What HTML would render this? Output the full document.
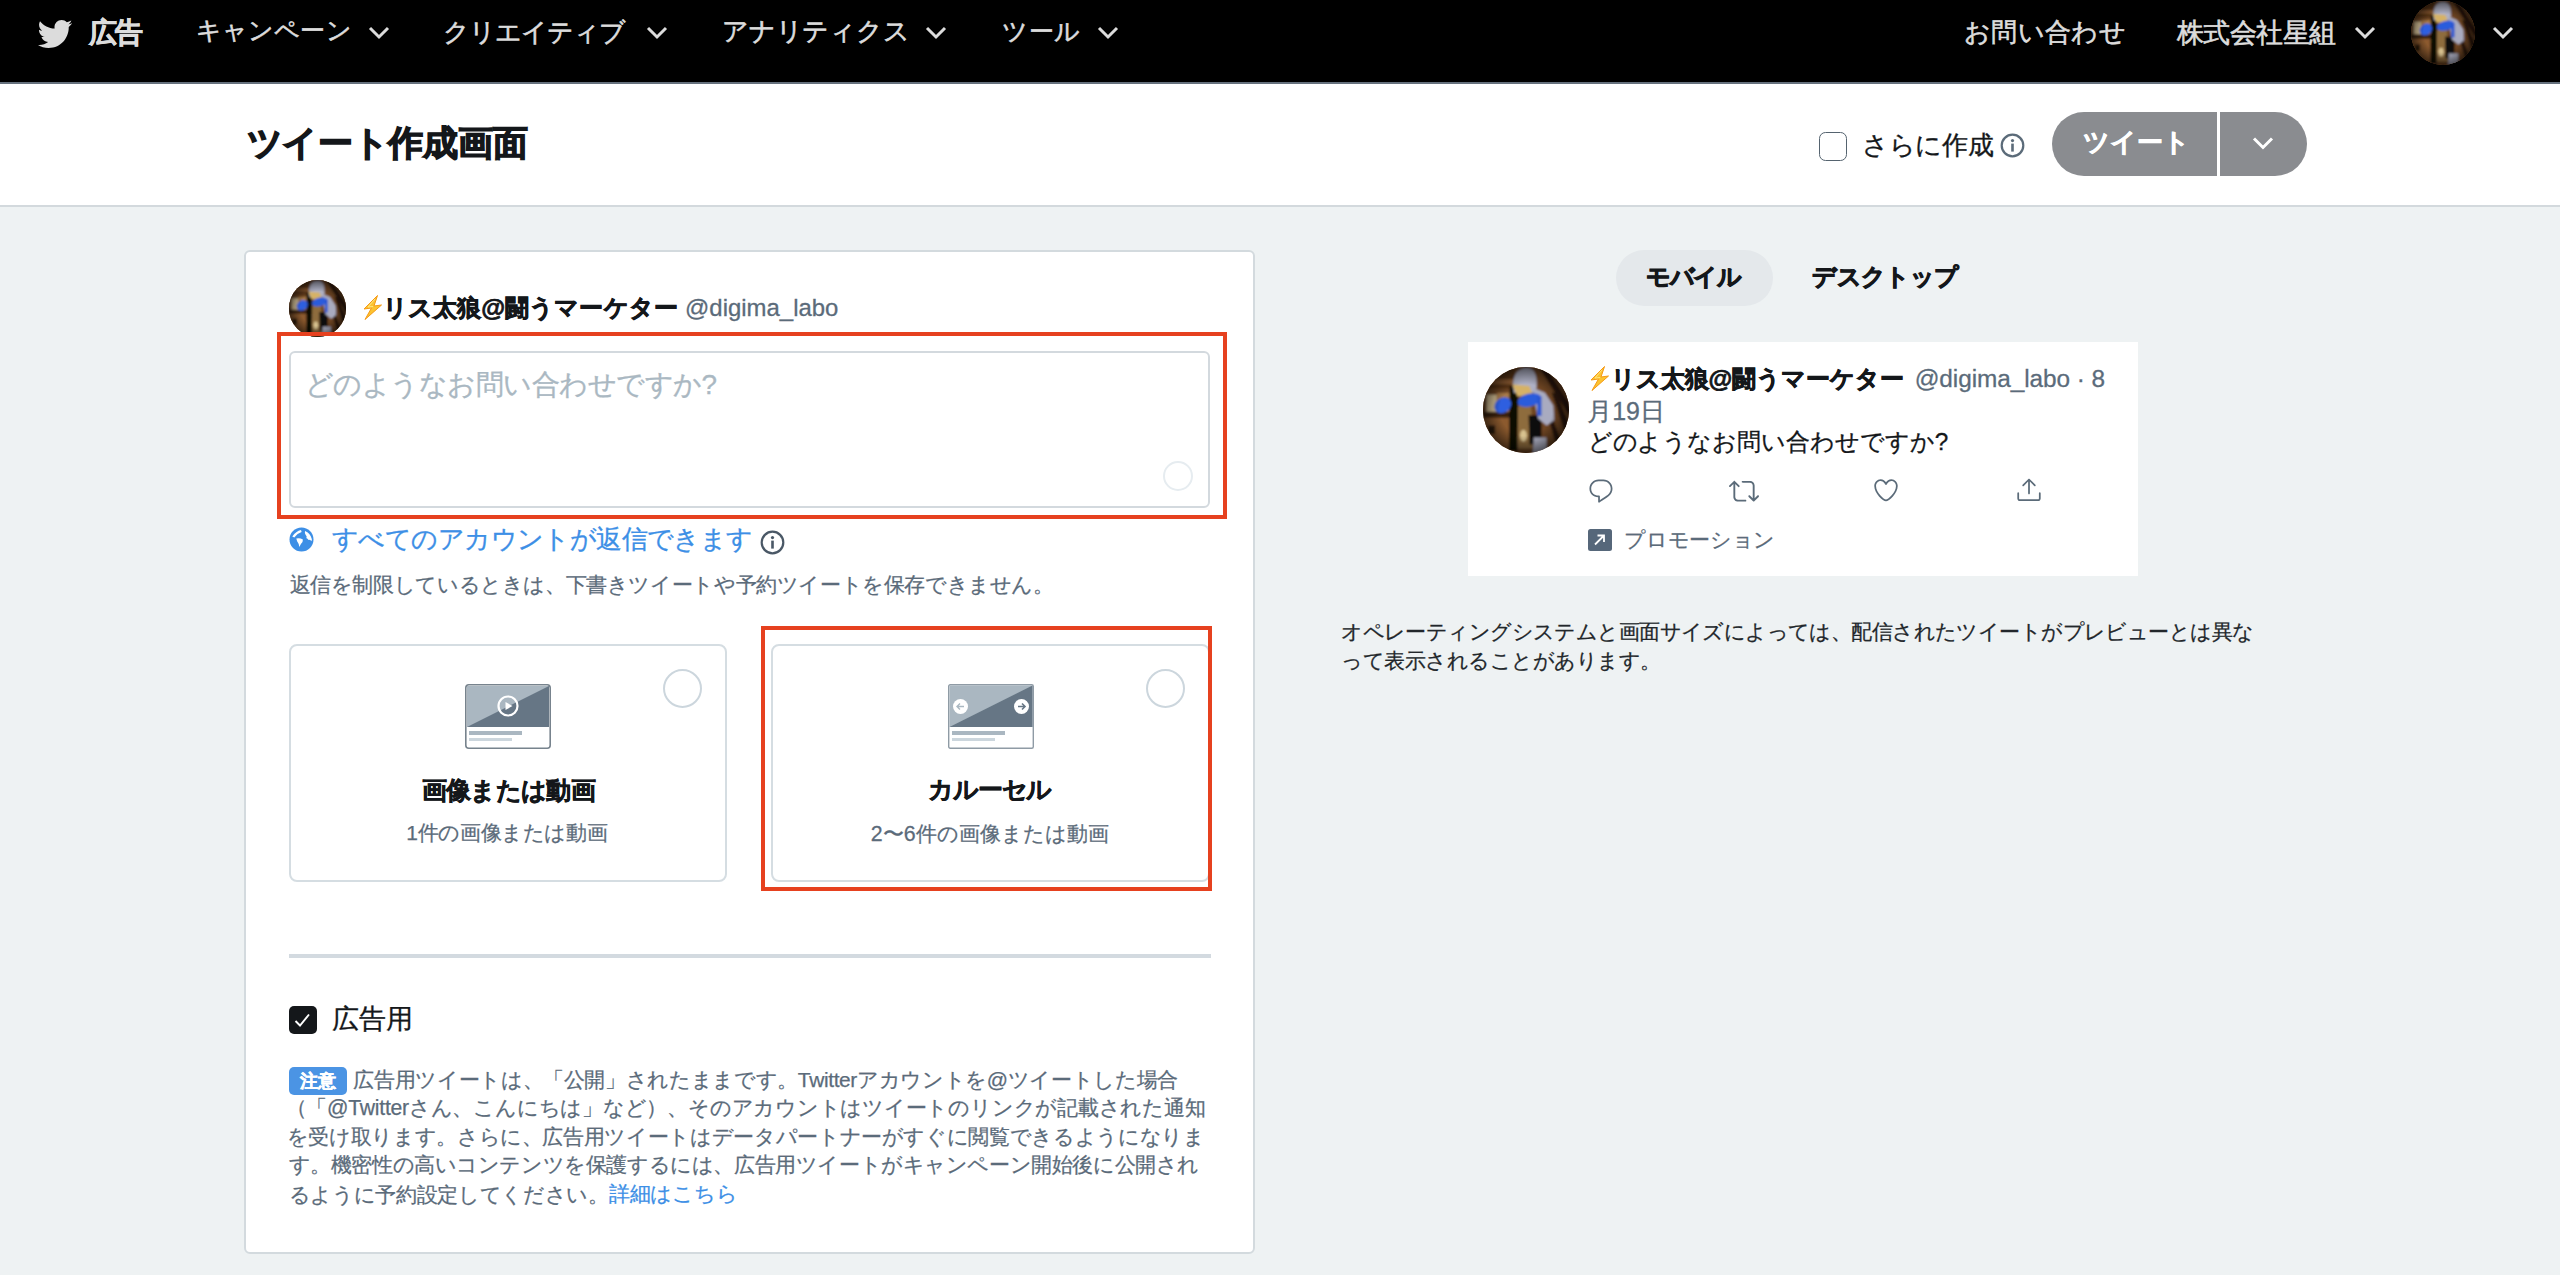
<!DOCTYPE html>
<html><head><meta charset="utf-8"><title>ツイート作成画面</title>
<style>
html,body{margin:0;padding:0}
body{width:2560px;height:1275px;overflow:hidden;position:relative;background:#eef2f3;font-family:"Liberation Sans",sans-serif;}
.a{position:absolute;box-sizing:border-box}
.t{position:absolute;white-space:nowrap;line-height:1}
.chev{position:absolute}
</style></head><body>
<!-- NAV -->
<div class="a" style="left:0;top:0;width:2560px;height:82px;background:#000"></div>
<div class="a" style="left:0;top:82px;width:2560px;height:2px;background:#66717d"></div>
<svg class="a" style="left:37.5px;top:18.5px" width="34.5" height="30" viewBox="1.2 2.2 22.6 19.6"><path fill="#dcdcdc" d="M23.643 4.937c-.835.37-1.732.62-2.675.733.962-.576 1.7-1.49 2.048-2.578-.9.534-1.897.922-2.958 1.13-.85-.904-2.06-1.47-3.4-1.47-2.572 0-4.658 2.086-4.658 4.66 0 .364.042.718.12 1.06-3.873-.195-7.304-2.05-9.602-4.868-.4.69-.63 1.49-.63 2.342 0 1.616.823 3.043 2.072 3.878-.764-.025-1.482-.234-2.11-.583v.06c0 2.257 1.605 4.14 3.737 4.568-.392.106-.803.162-1.227.162-.3 0-.593-.028-.877-.082.593 1.85 2.313 3.198 4.352 3.234-1.595 1.25-3.604 1.995-5.786 1.995-.376 0-.747-.022-1.112-.065 2.062 1.323 4.51 2.093 7.14 2.093 8.57 0 13.255-7.098 13.255-13.254 0-.2-.005-.402-.014-.602.91-.658 1.7-1.477 2.323-2.41z"/></svg>
<!-- nav chevrons -->
<svg class="chev" style="left:368px;top:26px" width="22" height="14" viewBox="0 0 22 14"><path d="M2 2 L11 11 L20 2" fill="none" stroke="#dcdcdc" stroke-width="3"/></svg>
<svg class="chev" style="left:646px;top:26px" width="22" height="14" viewBox="0 0 22 14"><path d="M2 2 L11 11 L20 2" fill="none" stroke="#dcdcdc" stroke-width="3"/></svg>
<svg class="chev" style="left:925px;top:26px" width="22" height="14" viewBox="0 0 22 14"><path d="M2 2 L11 11 L20 2" fill="none" stroke="#dcdcdc" stroke-width="3"/></svg>
<svg class="chev" style="left:1097px;top:26px" width="22" height="14" viewBox="0 0 22 14"><path d="M2 2 L11 11 L20 2" fill="none" stroke="#dcdcdc" stroke-width="3"/></svg>
<svg class="chev" style="left:2354px;top:26px" width="22" height="14" viewBox="0 0 22 14"><path d="M2 2 L11 11 L20 2" fill="none" stroke="#dcdcdc" stroke-width="3"/></svg>
<svg class="chev" style="left:2492px;top:26px" width="22" height="14" viewBox="0 0 22 14"><path d="M2 2 L11 11 L20 2" fill="none" stroke="#dcdcdc" stroke-width="3"/></svg>
<div class="a" style="left:2411px;top:1px;width:64px;height:64px;border-radius:50%;overflow:hidden;background:#5e3a1c"><svg width="64" height="64" viewBox="0 0 100 100"><defs><filter id="blur2411" x="-10%" y="-10%" width="120%" height="120%"><feGaussianBlur stdDeviation="1.4"/></filter><radialGradient id="vblur2411" cx="50%" cy="50%" r="50%"><stop offset="0.6" stop-color="#000" stop-opacity="0"/><stop offset="1" stop-color="#000" stop-opacity="0.55"/></radialGradient></defs><g filter="url(#blur2411)">
<rect x="-5" y="-5" width="110" height="110" fill="#6e4522"/>
<rect x="-5" y="-5" width="42" height="30" fill="#5a3517"/>
<rect x="0" y="14" width="36" height="6" fill="#8e5c30"/>
<rect x="-5" y="58" width="42" height="50" fill="#8c5a2e"/>
<rect x="-5" y="52" width="42" height="7" fill="#3a2110"/>
<rect x="4" y="32" width="12" height="20" fill="#d9c49a"/>
<rect x="16" y="30" width="18" height="22" fill="#a87a48"/>
<rect x="6" y="68" width="8" height="10" fill="#2e1a0a"/>
<path d="M62 -5 L70 -5 L105 50 L105 64 Z" fill="#2c1809"/>
<path d="M76 -5 L84 -5 L105 26 L105 38 Z" fill="#2c1809"/>
<path d="M80 30 L86 30 L105 80 L100 90 Z" fill="#2c1809"/>
<path d="M76 60 L82 62 L96 100 L88 100 Z" fill="#2c1809"/>
<path d="M39 46 L56 44 L58 95 L40 95 Z" fill="#8e6c3e"/>
<ellipse cx="47" cy="80" rx="4" ry="7" fill="#d8c290"/>
<path d="M31 22 L41 24 L40 98 L30 98 Z" fill="#0e0906"/>
<path d="M53 56 L68 56 L68 90 L54 90 Z" fill="#100b08"/>
<path d="M35 22 C34 6 44 0 52 1 C60 2 64 10 62 26 L58 30 L36 30 Z" fill="#aeb0c4"/>
<path d="M58 24 L72 30 L82 45 L83 62 L74 68 L64 60 L60 40 Z" fill="#a9abc0"/>
<path d="M59 82 L74 82 L74 100 L58 100 Z" fill="#b4b6ca"/>
<path d="M34 20 L54 22 L58 33 L40 34 Z" fill="#d6b266"/>
<ellipse cx="23" cy="44.5" rx="10.5" ry="8.5" transform="rotate(-35 23 44.5)" fill="#2f5fe0"/>
<ellipse cx="54" cy="38.5" rx="14" ry="7.5" transform="rotate(-14 54 38.5)" fill="#2c5bdc"/>
<path d="M63 34 L68 34 L68 57 L63 57 Z" fill="#2a56d0"/>
</g><g><rect x="0" y="0" width="100" height="100" fill="url(#vblur2411)"/>
</g></svg></div>
<!-- HEADER -->
<div class="a" style="left:0;top:84px;width:2560px;height:121px;background:#fff"></div>
<div class="a" style="left:0;top:205px;width:2560px;height:2px;background:#d3d9dd"></div>
<div class="a" style="left:1818.5px;top:132px;width:28.5px;height:28.5px;border:1.7px solid #55636f;border-radius:6.5px;background:#fff"></div>
<svg class="a" style="left:2000px;top:133px" width="25" height="25" viewBox="0 0 25 25"><circle cx="12.5" cy="12.5" r="10.8" fill="none" stroke="#5b6b79" stroke-width="2.2"/><circle cx="12.5" cy="7.6" r="1.6" fill="#5b6b79"/><rect x="11.2" y="10.6" width="2.6" height="8" fill="#5b6b79"/></svg>
<div class="a" style="left:2052px;top:112px;width:255px;height:64px;border-radius:32px;background:#8a8c90"></div>
<div class="a" style="left:2217px;top:112px;width:3px;height:64px;background:#fff"></div>
<svg class="chev" style="left:2252px;top:136px" width="22" height="15" viewBox="0 0 22 15"><path d="M2 2.5 L11 11.5 L20 2.5" fill="none" stroke="#fff" stroke-width="3"/></svg>
<!-- LEFT CARD -->
<div class="a" style="left:244px;top:250px;width:1010.5px;height:1003.5px;background:#fff;border:2px solid #d3dade;border-radius:6px"></div>
<div class="a" style="left:289px;top:280px;width:57px;height:57px;border-radius:50%;overflow:hidden;background:#5e3a1c"><svg width="57" height="57" viewBox="0 0 100 100"><defs><filter id="blur289" x="-10%" y="-10%" width="120%" height="120%"><feGaussianBlur stdDeviation="1.4"/></filter><radialGradient id="vblur289" cx="50%" cy="50%" r="50%"><stop offset="0.6" stop-color="#000" stop-opacity="0"/><stop offset="1" stop-color="#000" stop-opacity="0.55"/></radialGradient></defs><g filter="url(#blur289)">
<rect x="-5" y="-5" width="110" height="110" fill="#6e4522"/>
<rect x="-5" y="-5" width="42" height="30" fill="#5a3517"/>
<rect x="0" y="14" width="36" height="6" fill="#8e5c30"/>
<rect x="-5" y="58" width="42" height="50" fill="#8c5a2e"/>
<rect x="-5" y="52" width="42" height="7" fill="#3a2110"/>
<rect x="4" y="32" width="12" height="20" fill="#d9c49a"/>
<rect x="16" y="30" width="18" height="22" fill="#a87a48"/>
<rect x="6" y="68" width="8" height="10" fill="#2e1a0a"/>
<path d="M62 -5 L70 -5 L105 50 L105 64 Z" fill="#2c1809"/>
<path d="M76 -5 L84 -5 L105 26 L105 38 Z" fill="#2c1809"/>
<path d="M80 30 L86 30 L105 80 L100 90 Z" fill="#2c1809"/>
<path d="M76 60 L82 62 L96 100 L88 100 Z" fill="#2c1809"/>
<path d="M39 46 L56 44 L58 95 L40 95 Z" fill="#8e6c3e"/>
<ellipse cx="47" cy="80" rx="4" ry="7" fill="#d8c290"/>
<path d="M31 22 L41 24 L40 98 L30 98 Z" fill="#0e0906"/>
<path d="M53 56 L68 56 L68 90 L54 90 Z" fill="#100b08"/>
<path d="M35 22 C34 6 44 0 52 1 C60 2 64 10 62 26 L58 30 L36 30 Z" fill="#aeb0c4"/>
<path d="M58 24 L72 30 L82 45 L83 62 L74 68 L64 60 L60 40 Z" fill="#a9abc0"/>
<path d="M59 82 L74 82 L74 100 L58 100 Z" fill="#b4b6ca"/>
<path d="M34 20 L54 22 L58 33 L40 34 Z" fill="#d6b266"/>
<ellipse cx="23" cy="44.5" rx="10.5" ry="8.5" transform="rotate(-35 23 44.5)" fill="#2f5fe0"/>
<ellipse cx="54" cy="38.5" rx="14" ry="7.5" transform="rotate(-14 54 38.5)" fill="#2c5bdc"/>
<path d="M63 34 L68 34 L68 57 L63 57 Z" fill="#2a56d0"/>
</g><g><rect x="0" y="0" width="100" height="100" fill="url(#vblur289)"/>
</g></svg></div>
<svg class="a" style="left:355px;top:288px" width="40" height="40" viewBox="0 0 40 40"><path d="M22.5 7.5 L9 21 L16.5 20 L10 31.5 L26.5 17 L19 18 Z" fill="#fcc330" stroke="#f59a16" stroke-width="1" stroke-linejoin="round"/><path d="M20 11 L13 19 L18 18.5" fill="none" stroke="#ffe680" stroke-width="1"/></svg>
<div class="a" style="left:289px;top:351px;width:921px;height:157px;border:2px solid #d3d9de;border-radius:6px"></div>
<div class="a" style="left:1163px;top:461px;width:30px;height:30px;border:2.5px solid #e6ecf0;border-radius:50%"></div>
<div class="a" style="left:277px;top:332px;width:950px;height:187px;border:4px solid #e6411f"></div>
<svg class="a" style="left:289px;top:527px" width="25" height="25" viewBox="0 0 25 25"><circle cx="12.5" cy="12.5" r="12" fill="#3d8fe6"/><path d="M3.3 9.6 Q7 4.3 12 3.1 L12.6 4.9 Q8.2 6.2 5.3 10.4 Z" fill="#fff"/><path d="M7.3 11.6 Q10.6 10.6 13.9 12.4 Q14.1 15.2 11.9 17.1 L10.3 20 Q9.7 16.1 8.1 14.3 Z" fill="#fff"/><path d="M16 4.1 Q21.2 6 22.9 12.3 L22.5 14.2 Q21 12.6 19.5 12.9 Q18.4 11.1 17.4 11.3 Q18.2 9.1 16.7 8.1 Q15.4 6.5 16 4.1 Z" fill="#fff"/></svg>
<svg class="a" style="left:760px;top:530px" width="25" height="25" viewBox="0 0 25 25"><circle cx="12.5" cy="12.5" r="10.8" fill="none" stroke="#4a5866" stroke-width="2.2"/><circle cx="12.5" cy="7.6" r="1.6" fill="#4a5866"/><rect x="11.2" y="10.6" width="2.6" height="8" fill="#4a5866"/></svg>
<!-- media cards -->
<div class="a" style="left:289px;top:644px;width:438px;height:238px;border:2px solid #d5dde2;border-radius:8px"></div>
<div class="a" style="left:771px;top:644px;width:439px;height:238px;border:2px solid #d5dde2;border-radius:8px"></div>
<div class="a" style="left:663px;top:669px;width:39px;height:39px;border:2px solid #ccd6dd;border-radius:50%"></div>
<div class="a" style="left:1146px;top:669px;width:39px;height:39px;border:2px solid #ccd6dd;border-radius:50%"></div>
<svg class="a" style="left:465px;top:684px" width="86" height="65" viewBox="0 0 86 65">
 <rect x="0.8" y="0.8" width="84.4" height="63.4" rx="3" fill="#fff" stroke="#77838d" stroke-width="1.6"/>
 <path d="M2 2 H84 V43 H2 Z" fill="#aab7c1"/>
 <path d="M2 43 L84 2 V43 Z" fill="#667685"/>
 <circle cx="43" cy="22" r="9.5" fill="none" stroke="#fff" stroke-width="2.2"/>
 <path d="M40.5 18 L47.5 22 L40.5 26 Z" fill="#fff"/>
 <rect x="4" y="47" width="53" height="4" fill="#aab7c1"/>
 <rect x="4" y="54" width="43" height="3" fill="#ccd6dd"/>
</svg>
<svg class="a" style="left:948px;top:684px" width="86" height="65" viewBox="0 0 86 65">
 <rect x="0.7" y="0.7" width="84.6" height="63.6" rx="1.5" fill="#fff" stroke="#8f9ba5" stroke-width="1.4"/>
 <path d="M1.5 1.5 H84.5 V43 H1.5 Z" fill="#aab7c1"/>
 <path d="M1.5 43 L84.5 1.5 V43 Z" fill="#667685"/>
 <circle cx="12.5" cy="22.5" r="7.5" fill="#fff"/>
 <circle cx="73.5" cy="22.5" r="7.5" fill="#fff"/>
 <path d="M16 22.5 H9 M12 19.5 L9 22.5 L12 25.5" fill="none" stroke="#aab8c2" stroke-width="1.4"/>
 <path d="M70 22.5 H77 M74 19.5 L77 22.5 L74 25.5" fill="none" stroke="#667685" stroke-width="1.6"/>
 <rect x="4" y="47" width="53" height="4" fill="#aab7c1"/>
 <rect x="4" y="54" width="43" height="3" fill="#ccd6dd"/>
</svg>
<div class="a" style="left:761px;top:626px;width:451px;height:265px;border:4px solid #e6411f"></div>
<div class="a" style="left:289px;top:954px;width:922px;height:4px;background:#d3dae0"></div>
<div class="a" style="left:289px;top:1006px;width:28px;height:28px;border-radius:5px;background:#14171a"></div>
<svg class="a" style="left:289px;top:1006px" width="28" height="28" viewBox="0 0 28 28"><path d="M6.5 15 L11 19.5 L20 8.5" fill="none" stroke="#fff" stroke-width="1.9"/></svg>
<div class="a" style="left:289px;top:1067px;width:58px;height:28px;border-radius:5px;background:#4b94e4"></div>
<!-- RIGHT -->
<div class="a" style="left:1616px;top:250px;width:157px;height:56px;border-radius:28px;background:#e4e8eb"></div>
<div class="a" style="left:1468px;top:342px;width:670px;height:234px;background:#fff"></div>
<div class="a" style="left:1483px;top:367px;width:86px;height:86px;border-radius:50%;overflow:hidden;background:#5e3a1c"><svg width="86" height="86" viewBox="0 0 100 100"><defs><filter id="blur1483" x="-10%" y="-10%" width="120%" height="120%"><feGaussianBlur stdDeviation="1.4"/></filter><radialGradient id="vblur1483" cx="50%" cy="50%" r="50%"><stop offset="0.6" stop-color="#000" stop-opacity="0"/><stop offset="1" stop-color="#000" stop-opacity="0.55"/></radialGradient></defs><g filter="url(#blur1483)">
<rect x="-5" y="-5" width="110" height="110" fill="#6e4522"/>
<rect x="-5" y="-5" width="42" height="30" fill="#5a3517"/>
<rect x="0" y="14" width="36" height="6" fill="#8e5c30"/>
<rect x="-5" y="58" width="42" height="50" fill="#8c5a2e"/>
<rect x="-5" y="52" width="42" height="7" fill="#3a2110"/>
<rect x="4" y="32" width="12" height="20" fill="#d9c49a"/>
<rect x="16" y="30" width="18" height="22" fill="#a87a48"/>
<rect x="6" y="68" width="8" height="10" fill="#2e1a0a"/>
<path d="M62 -5 L70 -5 L105 50 L105 64 Z" fill="#2c1809"/>
<path d="M76 -5 L84 -5 L105 26 L105 38 Z" fill="#2c1809"/>
<path d="M80 30 L86 30 L105 80 L100 90 Z" fill="#2c1809"/>
<path d="M76 60 L82 62 L96 100 L88 100 Z" fill="#2c1809"/>
<path d="M39 46 L56 44 L58 95 L40 95 Z" fill="#8e6c3e"/>
<ellipse cx="47" cy="80" rx="4" ry="7" fill="#d8c290"/>
<path d="M31 22 L41 24 L40 98 L30 98 Z" fill="#0e0906"/>
<path d="M53 56 L68 56 L68 90 L54 90 Z" fill="#100b08"/>
<path d="M35 22 C34 6 44 0 52 1 C60 2 64 10 62 26 L58 30 L36 30 Z" fill="#aeb0c4"/>
<path d="M58 24 L72 30 L82 45 L83 62 L74 68 L64 60 L60 40 Z" fill="#a9abc0"/>
<path d="M59 82 L74 82 L74 100 L58 100 Z" fill="#b4b6ca"/>
<path d="M34 20 L54 22 L58 33 L40 34 Z" fill="#d6b266"/>
<ellipse cx="23" cy="44.5" rx="10.5" ry="8.5" transform="rotate(-35 23 44.5)" fill="#2f5fe0"/>
<ellipse cx="54" cy="38.5" rx="14" ry="7.5" transform="rotate(-14 54 38.5)" fill="#2c5bdc"/>
<path d="M63 34 L68 34 L68 57 L63 57 Z" fill="#2a56d0"/>
</g><g><rect x="0" y="0" width="100" height="100" fill="url(#vblur1483)"/>
</g></svg></div>
<svg class="a" style="left:1582px;top:359px" width="40" height="40" viewBox="0 0 40 40"><path d="M22.5 7.5 L9 21 L16.5 20 L10 31.5 L26.5 17 L19 18 Z" fill="#fcc330" stroke="#f59a16" stroke-width="1" stroke-linejoin="round"/><path d="M20 11 L13 19 L18 18.5" fill="none" stroke="#ffe680" stroke-width="1"/></svg>
<svg class="a" style="left:1587px;top:477px" width="28" height="28" viewBox="0 0 24 24"><path fill="#5b6b79" d="M14.046 2.242l-4.148-.01h-.002c-4.374 0-7.8 3.427-7.8 7.802 0 4.098 3.186 7.206 7.465 7.37v3.828c0 .108.044.286.12.403.142.225.384.347.632.347.138 0 .277-.038.402-.118.264-.168 6.473-4.14 8.088-5.506 1.902-1.61 3.04-3.97 3.043-6.312v-.017c-.006-4.367-3.43-7.787-7.8-7.788zm3.787 12.972c-1.134.96-4.862 3.405-6.772 4.643V16.67c0-.414-.335-.75-.75-.75h-.396c-3.66 0-6.318-2.476-6.318-5.886 0-3.534 2.768-6.302 6.3-6.302l4.147.01h.002c3.532 0 6.3 2.766 6.302 6.296-.003 1.91-.942 3.844-2.514 5.176z"/></svg>
<svg class="a" style="left:1729px;top:476px" width="30" height="30" viewBox="0 0 24 24"><path fill="#5b6b79" d="M23.77 15.67c-.292-.293-.767-.293-1.06 0l-2.22 2.22V7.65c0-2.068-1.683-3.75-3.75-3.75h-5.85c-.414 0-.75.336-.75.75s.336.75.75.75h5.85c1.24 0 2.25 1.01 2.25 2.25v10.24l-2.22-2.22c-.293-.293-.768-.293-1.06 0s-.294.768 0 1.06l3.5 3.5c.145.147.337.22.53.22s.383-.072.53-.22l3.5-3.5c.294-.292.294-.767 0-1.06zm-10.66 3.28H7.26c-1.24 0-2.25-1.01-2.25-2.25V6.46l2.22 2.22c.148.147.34.22.532.22s.384-.073.53-.22c.293-.293.293-.768 0-1.06l-3.5-3.5c-.293-.294-.768-.294-1.06 0l-3.5 3.5c-.294.292-.294.767 0 1.06s.767.293 1.06 0l2.22-2.22V16.7c0 2.068 1.683 3.75 3.75 3.75h5.85c.414 0 .75-.336.75-.75s-.337-.75-.75-.75z"/></svg>
<svg class="a" style="left:1872px;top:476px" width="28" height="28" viewBox="0 0 24 24"><path fill="#5b6b79" d="M12 21.638h-.014C9.403 21.59 1.95 14.856 1.95 8.478c0-3.064 2.525-5.754 5.403-5.754 2.29 0 3.83 1.58 4.646 2.73.814-1.148 2.354-2.73 4.645-2.73 2.88 0 5.404 2.69 5.404 5.755 0 6.376-7.454 13.11-10.037 13.157H12zM7.354 4.225c-2.08 0-3.903 1.988-3.903 4.255 0 5.74 7.034 11.596 8.55 11.658 1.518-.062 8.55-5.917 8.55-11.658 0-2.267-1.823-4.255-3.903-4.255-2.528 0-3.94 2.936-3.952 2.965-.23.562-1.156.562-1.387 0-.014-.03-1.425-2.965-3.954-2.965z"/></svg>
<svg class="a" style="left:2015px;top:476px" width="28" height="28" viewBox="0 0 24 24"><path fill="#5b6b79" d="M17.53 7.47l-5-5c-.293-.293-.768-.293-1.06 0l-5 5c-.294.293-.294.768 0 1.06s.767.294 1.06 0l3.72-3.72V15c0 .414.336.75.75.75s.75-.336.75-.75V4.81l3.72 3.72c.146.147.338.22.53.22s.384-.072.53-.22c.293-.293.293-.767 0-1.06z"/><path fill="#5b6b79" d="M19.708 21.475H4.292C3.028 21.475 2 20.447 2 19.183v-4.4c0-.414.336-.75.75-.75s.75.336.75.75v4.4c0 .437.355.792.792.792h15.416c.437 0 .792-.355.792-.792v-4.4c0-.414.336-.75.75-.75s.75.336.75.75v4.4c0 1.264-1.028 2.292-2.292 2.292z"/></svg>
<svg class="a" style="left:1588px;top:529px" width="24" height="22" viewBox="0 0 24 22"><rect x="0" y="0" width="24" height="22" rx="2.5" fill="#56677a"/><path d="M7 15.5 L16 6.5 M9.5 6.5 H16 V13" fill="none" stroke="#fff" stroke-width="1.8"/></svg>
<div class="t" style="left:89.28px;top:18.82px;font-size:27.64px;letter-spacing:-2.000px;-webkit-text-stroke:0.61px #dcdcdc;color:#dcdcdc;font-weight:bold;">広告</div>
<div class="t" style="left:195.81px;top:18.46px;font-size:25.43px;letter-spacing:0.160px;-webkit-text-stroke:0.56px #dcdcdc;color:#dcdcdc;">キャンペーン</div>
<div class="t" style="left:443.18px;top:19.70px;font-size:25.60px;letter-spacing:-1.000px;-webkit-text-stroke:0.56px #dcdcdc;color:#dcdcdc;">クリエイティブ</div>
<div class="t" style="left:722.16px;top:17.87px;font-size:26.36px;letter-spacing:-0.233px;-webkit-text-stroke:0.58px #dcdcdc;color:#dcdcdc;">アナリティクス</div>
<div class="t" style="left:1002.38px;top:18.79px;font-size:25.37px;letter-spacing:0.300px;-webkit-text-stroke:0.56px #dcdcdc;color:#dcdcdc;">ツール</div>
<div class="t" style="left:1964.15px;top:19.26px;font-size:26.49px;letter-spacing:0.320px;-webkit-text-stroke:0.58px #dcdcdc;color:#dcdcdc;">お問い合わせ</div>
<div class="t" style="left:2177.00px;top:19.82px;font-size:26.63px;letter-spacing:-0.600px;-webkit-text-stroke:0.59px #dcdcdc;color:#dcdcdc;">株式会社星組</div>
<div class="t" style="left:246.60px;top:126.21px;font-size:34.94px;letter-spacing:-0.286px;-webkit-text-stroke:1.30px #14171a;color:#14171a;font-weight:bold;">ツイート作成画面</div>
<div class="t" style="left:1861.79px;top:131.86px;font-size:26.26px;letter-spacing:-0.150px;-webkit-text-stroke:0.32px #14171a;color:#14171a;">さらに作成</div>
<div class="t" style="left:2082.94px;top:128.87px;font-size:26.39px;-webkit-text-stroke:0.58px #ffffff;color:#ffffff;font-weight:bold;">ツイート</div>
<div class="t" style="left:382.87px;top:295.79px;font-size:24.45px;letter-spacing:0.091px;-webkit-text-stroke:0.75px #14171a;color:#14171a;font-weight:bold;">リス太狼@闘うマーケター</div>
<div class="t" style="left:685.09px;top:296.33px;font-size:23.93px;-webkit-text-stroke:0.29px #5b6b7a;color:#5b6b7a;">@digima_labo</div>
<div class="t" style="left:304.54px;top:370.59px;font-size:27.88px;letter-spacing:-0.500px;-webkit-text-stroke:0.33px #aab8c2;color:#aab8c2;">どのようなお問い合わせですか?</div>
<div class="t" style="left:332.08px;top:526.64px;font-size:25.92px;letter-spacing:-0.587px;-webkit-text-stroke:0.31px #3d8fe6;color:#3d8fe6;">すべてのアカウントが返信できます</div>
<div class="t" style="left:289.62px;top:573.68px;font-size:21.00px;letter-spacing:-0.386px;-webkit-text-stroke:0.25px #5b6b7a;color:#5b6b7a;">返信を制限しているときは、下書きツイートや予約ツイートを保存できません。</div>
<div class="t" style="left:421.76px;top:778.62px;font-size:24.82px;letter-spacing:-0.667px;-webkit-text-stroke:0.55px #14171a;color:#14171a;font-weight:bold;">画像または動画</div>
<div class="t" style="left:406.32px;top:822.08px;font-size:20.99px;letter-spacing:-0.356px;-webkit-text-stroke:0.25px #5b6b7a;color:#5b6b7a;">1件の画像または動画</div>
<div class="t" style="left:928.43px;top:778.14px;font-size:24.51px;letter-spacing:-1.300px;-webkit-text-stroke:0.54px #14171a;color:#14171a;font-weight:bold;">カルーセル</div>
<div class="t" style="left:870.83px;top:824.23px;font-size:21.38px;letter-spacing:0.073px;-webkit-text-stroke:0.26px #5b6b7a;color:#5b6b7a;">2〜6件の画像または動画</div>
<div class="t" style="left:331.59px;top:1005.92px;font-size:26.92px;-webkit-text-stroke:0.32px #14171a;color:#14171a;">広告用</div>
<div class="t" style="left:300.08px;top:1072.82px;font-size:17.71px;letter-spacing:-0.400px;-webkit-text-stroke:0.40px #ffffff;color:#ffffff;font-weight:bold;">注意</div>
<div class="t" style="left:353.37px;top:1070.35px;font-size:20.93px;letter-spacing:-0.357px;-webkit-text-stroke:0.25px #5b6b7a;color:#5b6b7a;">広告用ツイートは、「公開」されたままです。Twitterアカウントを@ツイートした場合</div>
<div class="t" style="left:285.50px;top:1097.20px;font-size:21.15px;letter-spacing:-0.228px;-webkit-text-stroke:0.25px #5b6b7a;color:#5b6b7a;">（「@Twitterさん、こんにちは」など）、そのアカウントはツイートのリンクが記載された通知</div>
<div class="t" style="left:286.68px;top:1126.05px;font-size:21.05px;letter-spacing:-0.352px;-webkit-text-stroke:0.25px #5b6b7a;color:#5b6b7a;">を受け取ります。さらに、広告用ツイートはデータパートナーがすぐに閲覧できるようになりま</div>
<div class="t" style="left:288.58px;top:1155.26px;font-size:20.95px;letter-spacing:-0.410px;-webkit-text-stroke:0.25px #5b6b7a;color:#5b6b7a;">す。機密性の高いコンテンツを保護するには、広告用ツイートがキャンペーン開始後に公開され</div>
<div class="t" style="left:288.77px;top:1183.55px;font-size:21.15px;letter-spacing:-0.343px;-webkit-text-stroke:0.25px #5b6b7a;color:#5b6b7a;">るように予約設定してください。</div>
<div class="t" style="left:608.79px;top:1183.24px;font-size:21.19px;letter-spacing:-0.240px;-webkit-text-stroke:0.25px #3d8fe6;color:#3d8fe6;">詳細はこちら</div>
<div class="t" style="left:1646.08px;top:266.24px;font-size:23.69px;letter-spacing:-1.333px;-webkit-text-stroke:0.90px #14171a;color:#14171a;font-weight:bold;">モバイル</div>
<div class="t" style="left:1812.13px;top:264.51px;font-size:24.21px;letter-spacing:-0.560px;-webkit-text-stroke:0.90px #14171a;color:#14171a;font-weight:bold;">デスクトップ</div>
<div class="t" style="left:1610.90px;top:367.02px;font-size:24.30px;letter-spacing:-0.073px;-webkit-text-stroke:0.75px #14171a;color:#14171a;font-weight:bold;">リス太狼@闘うマーケター</div>
<div class="t" style="left:1914.65px;top:366.61px;font-size:24.39px;letter-spacing:-0.067px;-webkit-text-stroke:0.29px #5b6b7a;color:#5b6b7a;">@digima_labo · 8</div>
<div class="t" style="left:1587.35px;top:399.19px;font-size:24.93px;letter-spacing:-0.067px;-webkit-text-stroke:0.30px #5b6b7a;color:#5b6b7a;">月19日</div>
<div class="t" style="left:1587.60px;top:429.80px;font-size:24.40px;letter-spacing:-0.057px;-webkit-text-stroke:0.29px #14171a;color:#14171a;">どのようなお問い合わせですか?</div>
<div class="t" style="left:1624.30px;top:528.56px;font-size:21.10px;letter-spacing:-0.300px;-webkit-text-stroke:0.25px #5b6b7a;color:#5b6b7a;">プロモーション</div>
<div class="t" style="left:1341.15px;top:622.03px;font-size:20.91px;letter-spacing:-0.576px;-webkit-text-stroke:0.25px #22272b;color:#22272b;">オペレーティングシステムと画面サイズによっては、配信されたツイートがプレビューとは異な</div>
<div class="t" style="left:1341.06px;top:649.81px;font-size:21.01px;letter-spacing:-0.500px;-webkit-text-stroke:0.25px #22272b;color:#22272b;">って表示されることがあります。</div>
</body></html>
